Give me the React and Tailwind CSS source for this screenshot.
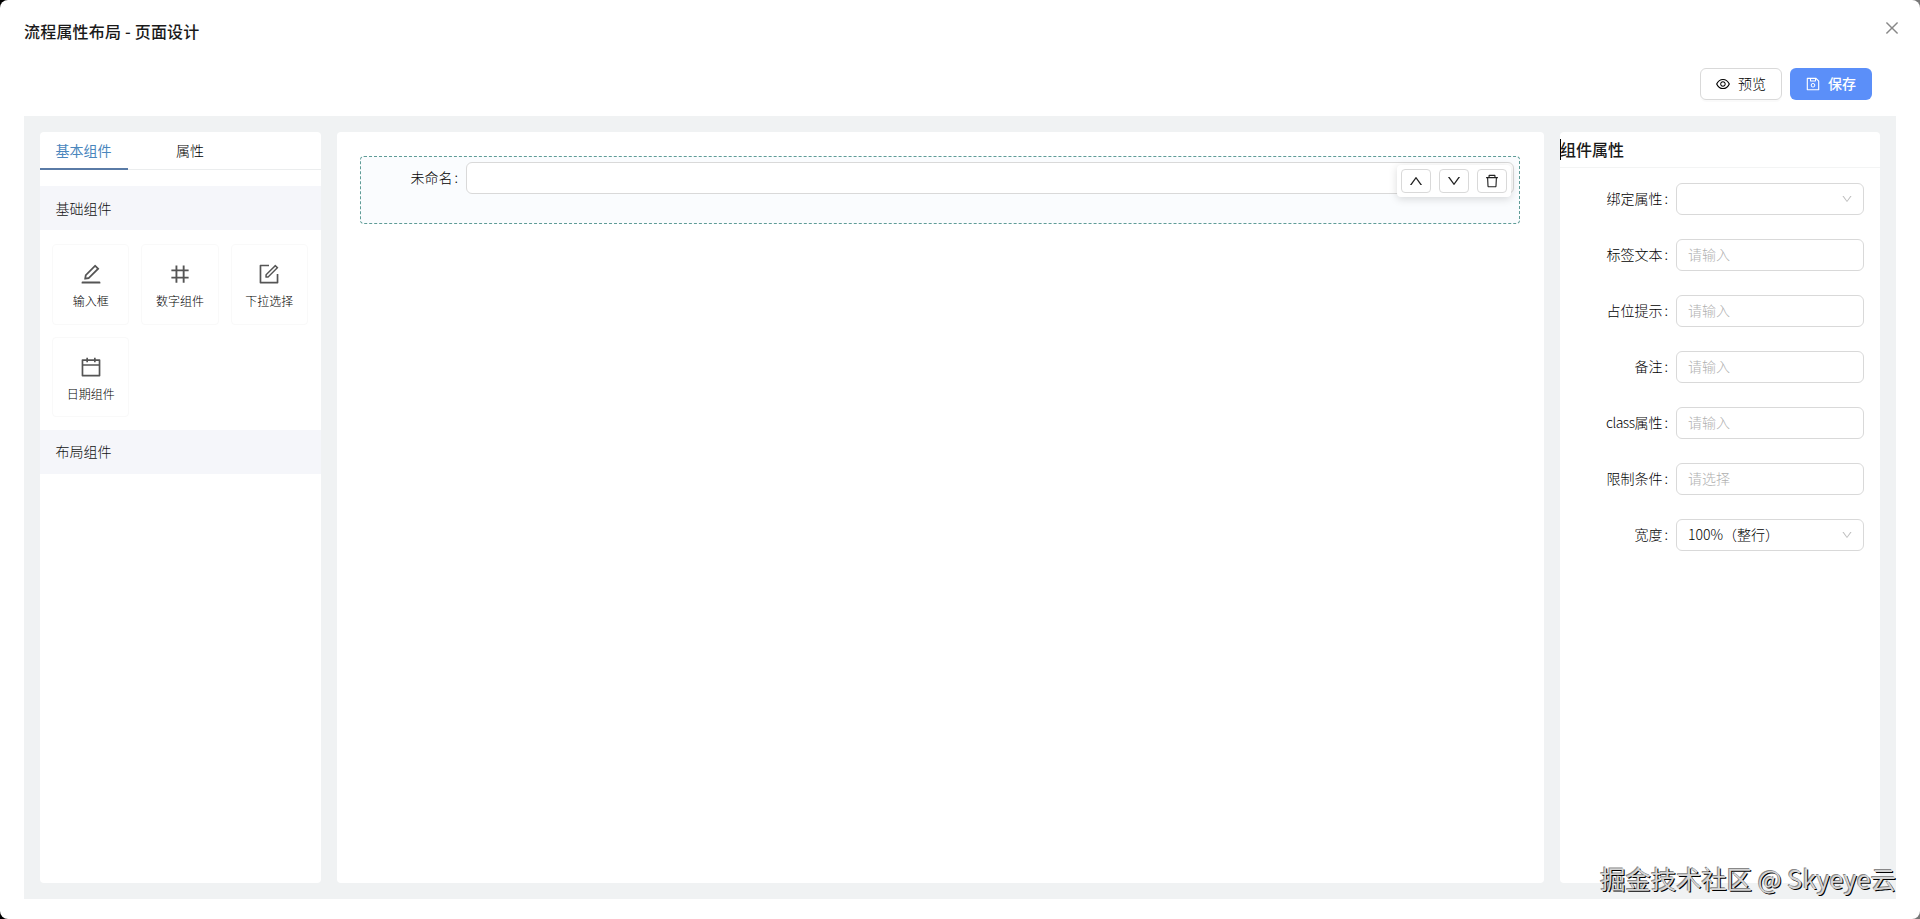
import {
  AiOutlineCalendar,
  AiOutlineClose,
  AiOutlineDelete,
  AiOutlineDown,
  AiOutlineEdit,
  AiOutlineEye,
  AiOutlineForm,
  AiOutlineNumber,
  AiOutlineSave,
  AiOutlineUp,
} from 'react-icons/ai';

const widgets = [
  { label: '输入框', icon: AiOutlineEdit },
  { label: '数字组件', icon: AiOutlineNumber },
  { label: '下拉选择', icon: AiOutlineForm },
  { label: '日期组件', icon: AiOutlineCalendar },
];

const fields = [
  { label: '绑定属性', select: true },
  { label: '标签文本', placeholder: '请输入' },
  { label: '占位提示', placeholder: '请输入' },
  { label: '备注', placeholder: '请输入' },
  { prefix: 'class', label: '属性', placeholder: '请输入' },
  { label: '限制条件', placeholder: '请选择' },
  { label: '宽度', value: '100%（整行）', select: true },
];

function GroupTitle({ children, className }) {
  return (
    <div className={`flex h-11 items-center bg-[#f5f6fa] px-[15.5px] text-[#111] ${className}`}>{children}</div>
  );
}

function FieldLabel({ prefix, children, className }) {
  return (
    <label className={`flex shrink-0 items-center justify-end pr-2 pb-0.5 ${className}`}>
      {prefix && <span className="tracking-[-0.5px]">{prefix}</span>}
      {children}
      <span className="ml-0.5">:</span>
    </label>
  );
}

function WidgetPanel() {
  return (
    <aside className="flex w-[281px] shrink-0 flex-col overflow-hidden rounded bg-white">
      <div className="flex h-[38px] shrink-0 gap-8 border-b border-[#ebedee]">
        <div className="flex h-[38px] items-center border-b-2 border-[#5a7ba6] pr-[16.5px] pl-[15.5px] font-normal text-[#4a86bd]">基本组件</div>
        <div className="flex items-center px-4 pb-0.5">属性</div>
      </div>
      <div className="mt-4">
        <GroupTitle className="pb-px">基础组件</GroupTitle>
        <div className="grid grid-cols-3 gap-3 pt-3.5 pr-[13px] pb-[13px] pl-3">
          {widgets.map(({ label, icon: Icon }) => (
            <div
              key={label}
              className="flex h-[80.5px] flex-col items-center justify-center gap-[5px] rounded-sm border border-[#f9f9f9] bg-white pt-[5px]"
            >
              <Icon className="text-2xl text-[#555]" />
              <span className="text-xs leading-5">{label}</span>
            </div>
          ))}
        </div>
        <GroupTitle className="pb-0.5">布局组件</GroupTitle>
      </div>
    </aside>
  );
}

function Canvas() {
  return (
    <main className="min-w-0 flex-1 rounded bg-white pt-6 pr-6 pl-[23px]">
      <div className="relative flex h-[68px] rounded-sm border border-dashed border-[#5f9c97] bg-[#fafcfe] px-[5px] pt-[5px]">
        <FieldLabel className="h-8 w-[100px]">未命名</FieldLabel>
        <div className="h-8 flex-1 rounded-md border border-[#d9d9d9] bg-white"></div>
        <div className="absolute top-2 right-2 flex gap-2 rounded bg-white p-1 shadow-[0_2px_8px_rgba(0,0,0,0.15)]">
          {[AiOutlineUp, AiOutlineDown, AiOutlineDelete].map((Icon, i) => (
            <button key={i} className="flex h-6 w-[30px] items-center justify-center rounded border border-[#d9d9d9] bg-white text-base text-[#222]">
              <Icon />
            </button>
          ))}
        </div>
      </div>
    </main>
  );
}

function PropertyPanel() {
  return (
    <aside className="w-80 shrink-0 rounded bg-white">
      <div className="flex h-9 items-center border-b border-[#f3f4f4] text-base font-medium text-[#1a1a1a]">
        <span className="-mr-px h-[21px] w-px bg-black"></span>
        <span className="pb-0.5">组件属性</span>
      </div>
      <div className="flex flex-col gap-6 pt-[15px] pr-4">
        {fields.map((field) => (
          <div key={field.label} className="flex h-8 items-center">
            <FieldLabel prefix={field.prefix} className="w-[116px]">{field.label}</FieldLabel>
            <div className="flex h-8 flex-1 items-center justify-between rounded-md border border-[#d9d9d9] pr-2.5 pl-[11px]">
              {field.value ? <span className="pb-0.5">{field.value}</span> : <span className="pb-0.5 text-[#b0b0b0]">{field.placeholder}</span>}
              {field.select && <AiOutlineDown className="text-xs text-[#bfbfbf]" />}
            </div>
          </div>
        ))}
      </div>
    </aside>
  );
}

export default function App() {
  return (
    <div className="h-[919px] w-[1920px] bg-linear-to-r from-black to-[#777] font-['Noto_Sans_CJK_SC',sans-serif] text-sm font-light text-black">
      <div className="relative flex h-full flex-col rounded-lg bg-white px-6 pb-5">
        <header className="flex h-[68px] shrink-0 justify-between">
          <h1 className="pt-[19px] text-base font-medium tracking-[0.2px] text-[#1a1a1a]">流程属性布局 - 页面设计</h1>
          <AiOutlineClose className="mt-[19px] -mr-[5px] text-lg text-[#888]" />
        </header>
        <div className="flex h-12 shrink-0 items-start justify-end gap-2 pr-6">
          <button className="flex h-8 items-center gap-[7px] rounded-md border border-[#d9d9d9] pr-[15px] pl-3.5 shadow-[0_2px_0_rgba(0,0,0,0.02)]">
            <AiOutlineEye className="text-base" />
            <span className="pb-0.5">预览</span>
          </button>
          <button className="flex h-8 items-center gap-[7px] rounded-md bg-[#5b8ff9] pr-4 pl-[15px] font-medium text-white">
            <AiOutlineSave className="text-base" />
            <span className="pb-0.5">保存</span>
          </button>
        </div>
        <div className="flex min-h-0 flex-1 gap-4 bg-[#f0f2f3] p-4">
          <WidgetPanel />
          <Canvas />
          <PropertyPanel />
        </div>
        <div className="absolute right-6 bottom-[21px] text-[25.3px] leading-10 font-normal whitespace-nowrap text-[#d4d4d4] [text-shadow:1px_1px_0_#000,-1px_-1px_0_#888]">
          掘金技术社区 @ Skyeye云
        </div>
      </div>
    </div>
  );
}
